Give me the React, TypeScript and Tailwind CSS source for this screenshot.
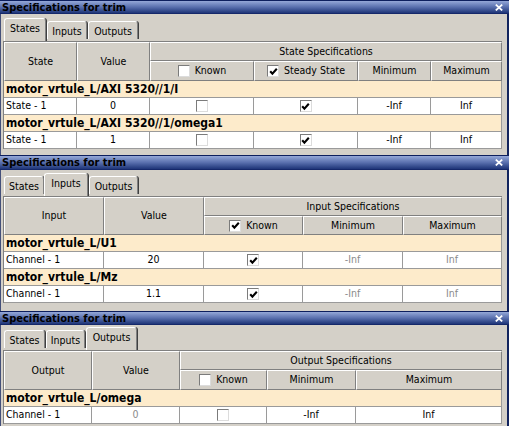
import React from "react";

type CellVal = { text?: string; box?: "on" | "off"; dim?: boolean; left?: boolean };

type PanelDef = {
  active: number;
  tabs: string[]; // class strings per tab (width/margin)
  titleH: string;
  stripH: string;
  bottomH: string;
  r1: string;
  r2: string;
  cols: string;
  specSpan: string;
  head: [string, string];
  specTitle: string;
  sub: CellVal[];
  groups: { name: string; row: CellVal[] }[];
  grow?: boolean;
};

const TAB_NAMES = ["States", "Inputs", "Outputs"];

function Box({ on }: { on: boolean }) {
  return (
    <span className="inline-flex h-[12px] w-[12px] shrink-0 items-center justify-center border border-t-[#7b7b7b] border-l-[#7b7b7b] border-b-[#dcdcdc] border-r-[#dcdcdc] bg-white">
      {on && (
        <svg width="9" height="9" viewBox="0 0 9 9">
          <path d="M1.2 4.2 L3.4 6.6 L7.8 1.8" fill="none" stroke="#000" strokeWidth="2.1" />
        </svg>
      )}
    </span>
  );
}

function TitleBar({ h }: { h: string }) {
  return (
    <div
      className={`${h} flex items-center justify-between border-t border-t-[#0d1f5e] border-b border-b-[#15286a] bg-linear-to-b from-[#95a8d8] via-[#5a70ae] to-[#1f3578] pl-[2px] pr-[6px]`}
    >
      <span className="text-[11px] font-bold leading-none text-black">Specifications for trim</span>
      <svg width="8" height="7" viewBox="0 0 8 7">
        <path d="M0.8 0.6 L7.2 6.4 M7.2 0.6 L0.8 6.4" stroke="#fff" strokeWidth="1.8" />
      </svg>
    </div>
  );
}

function Tab({ name, active, cls }: { name: string; active: boolean; cls: string }) {
  return (
    <div
      className={`${cls} flex shrink-0 justify-center rounded-t-[3px] border-l border-t border-l-white border-t-white border-r border-r-[#808080] shadow-[1px_0_0_#404040] bg-[#d4d0c8] ${
        active ? "h-[23px] pt-[3px]" : "mb-[2px] h-[18px] pt-[3px]"
      }`}
    >
      <span className="leading-[12px]">{name}</span>
    </div>
  );
}

function Val({ v }: { v: CellVal }) {
  if (v.box) return <Box on={v.box === "on"} />;
  return <span className={v.dim ? "text-[#8a8a8a]" : "text-black"}>{v.text}</span>;
}

const headCell =
  "flex items-center justify-center border-t border-l border-t-white border-l-white border-r border-b border-r-[#808080] border-b-[#808080] bg-[#d4d0c8]";

function Panel({ p }: { p: PanelDef }) {
  return (
    <div className={`flex flex-col bg-[#d4d0c8] ${p.grow ? "flex-1" : ""}`}>
      <TitleBar h={p.titleH} />
      <div className="flex flex-1 flex-col border-l border-l-[#44507a] border-r-2 border-r-[#12245e] pl-[2px]">
        <div className={`${p.stripH} flex items-end gap-0`}>
          {TAB_NAMES.map((n, i) => (
            <Tab key={n} name={n} active={i === p.active} cls={p.tabs[i]} />
          ))}
        </div>
        <div className={`grid w-fit border-l border-t border-l-[#808080] border-t-[#808080] ${p.cols}`}>
          <div className={`${headCell} row-span-2`}>{p.head[0]}</div>
          <div className={`${headCell} row-span-2`}>{p.head[1]}</div>
          <div className={`${headCell} ${p.specSpan} ${p.r1}`}>{p.specTitle}</div>
          {p.sub.map((s, i) => (
            <div key={i} className={`${headCell} ${p.r2} gap-[5px]`}>
              {s.box && <Box on={s.box === "on"} />}
              <span>{s.text}</span>
            </div>
          ))}
          {p.groups.map((g) => (
            <React.Fragment key={g.name}>
              <div className="col-span-full flex h-[17px] items-center border-r border-b border-r-[#9a9a9a] border-b-[#9a9a9a] bg-[#fdebcb] pl-[2px] text-[12px] font-bold">
                {g.name}
              </div>
              {g.row.map((v, i) => (
                <div
                  key={i}
                  className={`flex h-[17px] items-center border-r border-b border-r-[#9a9a9a] border-b-[#9a9a9a] bg-white ${
                    v.left ? "justify-start pl-[2px]" : "justify-center"
                  }`}
                >
                  <Val v={v} />
                </div>
              ))}
            </React.Fragment>
          ))}
        </div>
        <div className={p.bottomH} />
      </div>
    </div>
  );
}

const panels: PanelDef[] = [
  {
    active: 0,
    tabs: ["w-[42px] ml-[1px]", "w-[40px] ml-[1px]", "w-[50px] ml-[1px]"],
    titleH: "h-[14px]",
    stripH: "h-[27px]",
    bottomH: "h-[6px]",
    r1: "h-[19px]",
    r2: "h-[20px]",
    cols: "grid-cols-[73px_73px_104px_104px_73px_71px]",
    specSpan: "col-span-4",
    head: ["State", "Value"],
    specTitle: "State Specifications",
    sub: [{ text: "Known", box: "off" }, { text: "Steady State", box: "on" }, { text: "Minimum" }, { text: "Maximum" }],
    groups: [
      {
        name: "motor_vrtule_L/AXI 5320//1/I",
        row: [{ text: "State - 1", left: true }, { text: "0" }, { box: "off" }, { box: "on" }, { text: "-Inf" }, { text: "Inf" }],
      },
      {
        name: "motor_vrtule_L/AXI 5320//1/omega1",
        row: [{ text: "State - 1", left: true }, { text: "1" }, { box: "off" }, { box: "on" }, { text: "-Inf" }, { text: "Inf" }],
      },
    ],
  },
  {
    active: 1,
    tabs: ["w-[40px] ml-[1px]", "w-[44px] ml-0", "w-[49px] ml-[1px]"],
    titleH: "h-[15px]",
    stripH: "h-[26px]",
    bottomH: "h-[8px]",
    r1: "h-[19px]",
    r2: "h-[19px]",
    cols: "grid-cols-[100px_100px_99px_100px_99px]",
    specSpan: "col-span-3",
    head: ["Input", "Value"],
    specTitle: "Input Specifications",
    sub: [{ text: "Known", box: "on" }, { text: "Minimum" }, { text: "Maximum" }],
    groups: [
      {
        name: "motor_vrtule_L/U1",
        row: [{ text: "Channel - 1", left: true }, { text: "20" }, { box: "on" }, { text: "-Inf", dim: true }, { text: "Inf", dim: true }],
      },
      {
        name: "motor_vrtule_L/Mz",
        row: [{ text: "Channel - 1", left: true }, { text: "1.1" }, { box: "on" }, { text: "-Inf", dim: true }, { text: "Inf", dim: true }],
      },
    ],
  },
  {
    active: 2,
    tabs: ["w-[41px] ml-[1px]", "w-[39px] ml-[1px]", "w-[51px] ml-[1px]"],
    titleH: "h-[14px]",
    stripH: "h-[25px]",
    bottomH: "h-[4px]",
    r1: "h-[19px]",
    r2: "h-[20px]",
    cols: "grid-cols-[88px_88px_87px_89px_146px]",
    specSpan: "col-span-3",
    head: ["Output", "Value"],
    specTitle: "Output Specifications",
    sub: [{ text: "Known", box: "off" }, { text: "Minimum" }, { text: "Maximum" }],
    groups: [
      {
        name: "motor_vrtule_L/omega",
        row: [{ text: "Channel - 1", left: true }, { text: "0", dim: true }, { box: "off" }, { text: "-Inf" }, { text: "Inf" }],
      },
    ],
    grow: true,
  },
];

export default function App() {
  return (
    <div className="flex h-screen w-full flex-col overflow-hidden bg-[#d4d0c8] font-['DejaVu_Sans_Condensed','DejaVu_Sans',sans-serif] text-[10.5px] text-black">
      {panels.map((p, i) => (
        <Panel key={i} p={p} />
      ))}
    </div>
  );
}
